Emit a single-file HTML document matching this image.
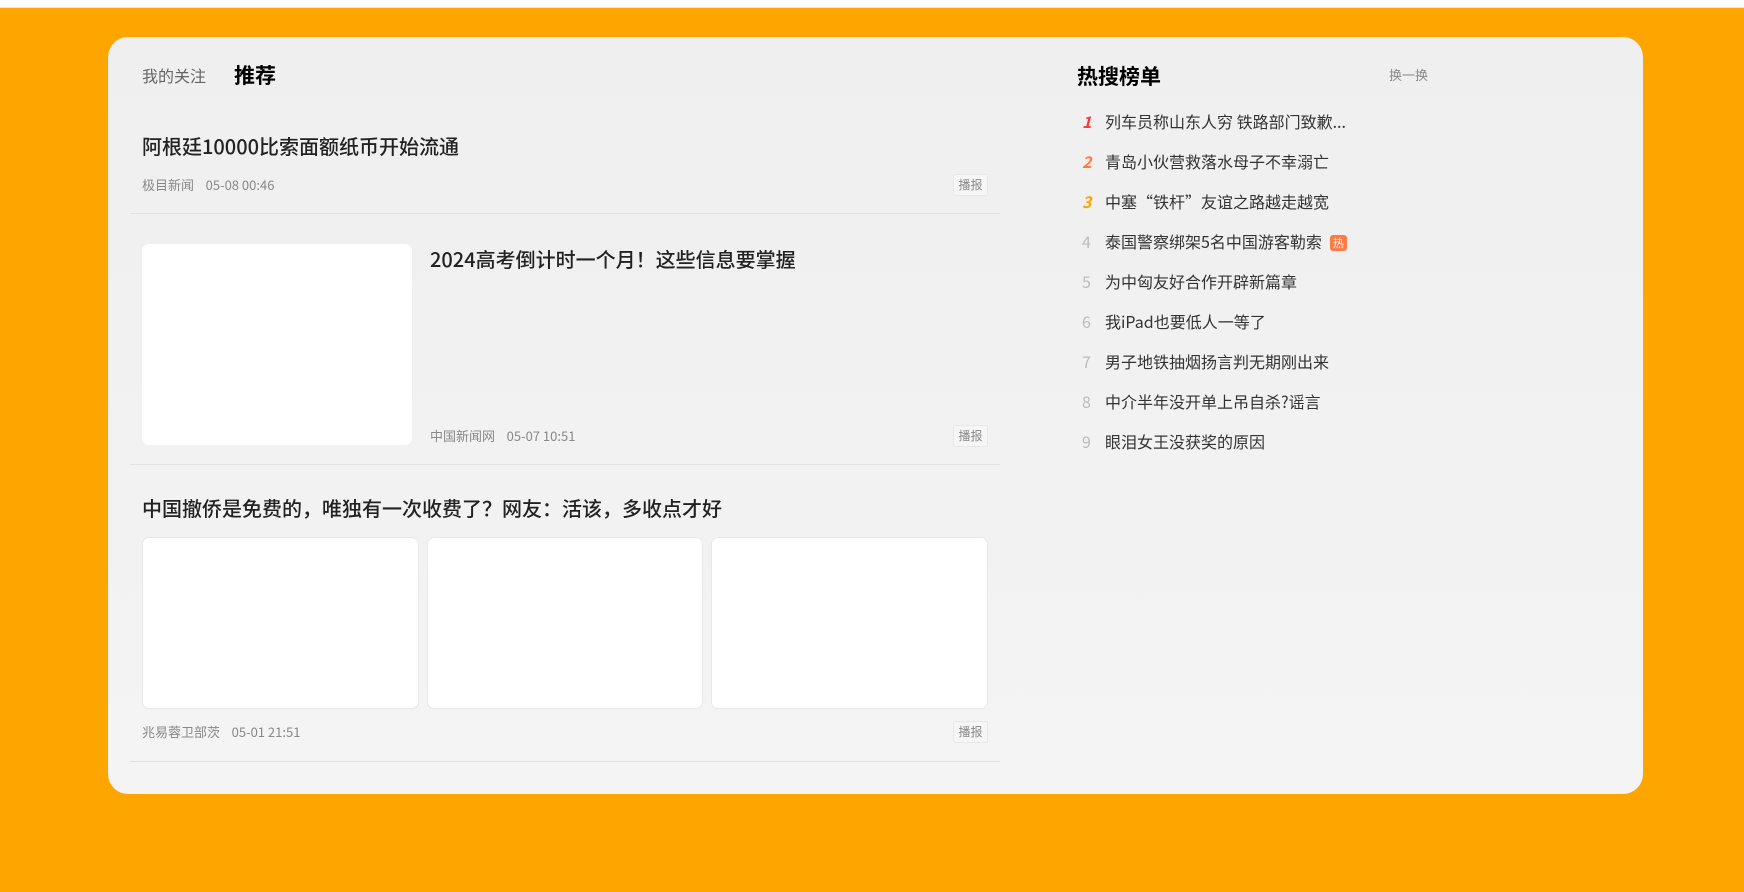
<!DOCTYPE html>
<html><head><meta charset="utf-8"><style>
*{margin:0;padding:0;box-sizing:border-box}
body{width:1744px;height:892px;background:#ffa500;font-family:"Noto Sans CJK SC","Liberation Sans",sans-serif;position:relative;overflow:hidden;line-height:1.2}
.top{position:absolute;left:0;top:0;width:1744px;height:8px;background:#fff;border-bottom:1px solid #e6e6e6}
.card{position:absolute;left:108px;top:37px;width:1535px;height:757px;border-radius:20px;background:linear-gradient(#efefef,#f4f4f4)}
.a{position:absolute;white-space:nowrap}
.tab{font-size:16px;color:#666}
.tabb{font-size:21px;font-weight:bold;color:#000}
.t{font-size:20px;color:#222;font-weight:500}
.m{font-size:13px;color:#888}
.btn{position:absolute;width:35px;height:22px;border:1px solid #e8e8e8;border-radius:3px;font-size:12px;color:#888;text-align:center;line-height:20px;background:#f6f6f6}
.line{position:absolute;left:130px;width:870px;height:1px;background:#e0e0e0}
.img{position:absolute;background:#fff;border-radius:7px;border:1px solid #e8e8e8}
.row{position:absolute;left:1080px;height:22px;line-height:22px;font-size:16px;white-space:nowrap}
.n{display:inline-block;width:25px;text-align:left;padding-left:2px}
.h{color:#333}
.hot{display:inline-block;width:17px;height:16px;background:#ff7a45;color:#fff;font-size:11px;border-radius:3px;text-align:center;line-height:16px;margin-left:8px;vertical-align:1px}
</style></head><body>
<div class="top"></div>
<div class="card"></div>
<div class="a tab" style="left:142px;top:66px">我的关注</div>
<div class="a tabb" style="left:234px;top:63px">推荐</div>

<div class="a t" style="left:142px;top:134px">阿根廷10000比索面额纸币开始流通</div>
<div class="a m" style="left:142px;top:177px">极目新闻&nbsp;&nbsp;&nbsp;&nbsp;05-08 00:46</div>
<div class="btn" style="left:953px;top:174px">播报</div>
<div class="line" style="top:213px"></div>

<div class="img" style="left:142px;top:244px;width:270px;height:201px;border:none"></div>
<div class="a t" style="left:430px;top:247px">2024高考倒计时一个月！这些信息要掌握</div>
<div class="a m" style="left:430px;top:428px">中国新闻网&nbsp;&nbsp;&nbsp;&nbsp;05-07 10:51</div>
<div class="btn" style="left:953px;top:425px">播报</div>
<div class="line" style="top:464px"></div>

<div class="a t" style="left:142px;top:496px">中国撤侨是免费的，唯独有一次收费了？网友：活该，多收点才好</div>
<div class="img" style="left:142px;top:537px;width:277px;height:172px"></div>
<div class="img" style="left:427px;top:537px;width:276px;height:172px"></div>
<div class="img" style="left:711px;top:537px;width:277px;height:172px"></div>
<div class="a m" style="left:142px;top:724px">兆易蓉卫部茨&nbsp;&nbsp;&nbsp;&nbsp;05-01 21:51</div>
<div class="btn" style="left:953px;top:721px">播报</div>
<div class="line" style="top:761px"></div>

<div class="a tabb" style="left:1077px;top:64px">热搜榜单</div>
<div class="a m" style="left:1389px;top:67px">换一换</div>

<div class="row" style="top:110px"><span class="n" style="color:#f5393e;font-style:italic;font-weight:bold">1</span><span class="h">列车员称山东人穷 铁路部门致歉...</span></div>
<div class="row" style="top:150px"><span class="n" style="color:#ff7a45;font-style:italic;font-weight:bold">2</span><span class="h">青岛小伙营救落水母子不幸溺亡</span></div>
<div class="row" style="top:190px"><span class="n" style="color:#ffa500;font-style:italic;font-weight:bold">3</span><span class="h">中塞“铁杆”友谊之路越走越宽</span></div>
<div class="row" style="top:230px"><span class="n" style="color:#bbb">4</span><span class="h">泰国警察绑架5名中国游客勒索<span class="hot">热</span></span></div>
<div class="row" style="top:270px"><span class="n" style="color:#bbb">5</span><span class="h">为中匈友好合作开辟新篇章</span></div>
<div class="row" style="top:310px"><span class="n" style="color:#bbb">6</span><span class="h">我iPad也要低人一等了</span></div>
<div class="row" style="top:350px"><span class="n" style="color:#bbb">7</span><span class="h">男子地铁抽烟扬言判无期刚出来</span></div>
<div class="row" style="top:390px"><span class="n" style="color:#bbb">8</span><span class="h">中介半年没开单上吊自杀?谣言</span></div>
<div class="row" style="top:430px"><span class="n" style="color:#bbb">9</span><span class="h">眼泪女王没获奖的原因</span></div>
</body></html>
